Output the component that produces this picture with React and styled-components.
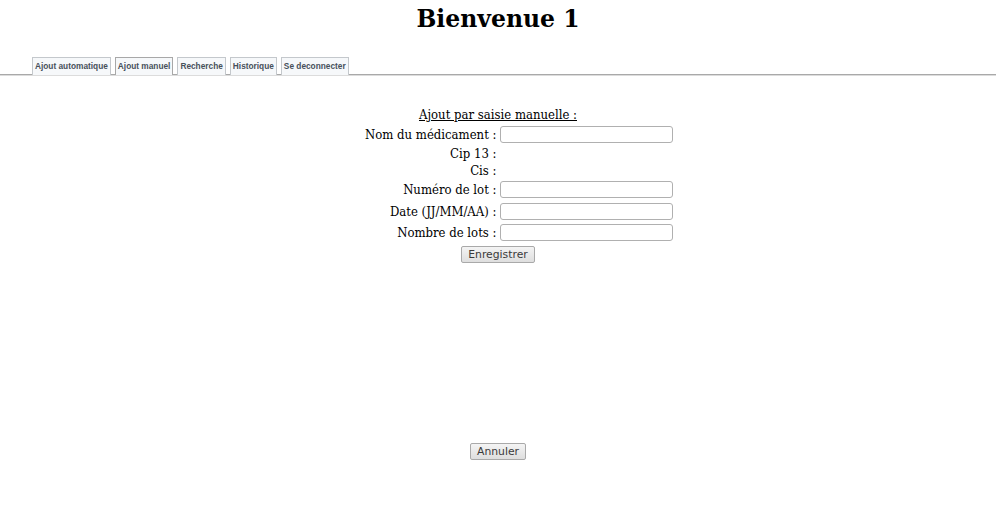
import styled, { createGlobalStyle } from "styled-components";

const GlobalStyle = createGlobalStyle`
  html, body {
    margin: 0;
    padding: 0;
    background: #ffffff;
  }
  body {
    font-family: "DejaVu Serif", serif;
    color: #000;
  }
`;

const Page = styled.div`
  width: 996px;
  height: 511px;
  display: flex;
  flex-direction: column;
`;

const Title = styled.h1`
  margin: 4px 0 0;
  height: 30px;
  text-align: center;
  font-family: "DejaVu Serif", serif;
  font-weight: bold;
  font-size: 23.5px;
  line-height: 30px;
`;

const TabBar = styled.ul`
  list-style: none;
  margin: 23px 0 0;
  padding: 0 0 0 32px;
  display: flex;
  gap: 4px;
  border-bottom: 1px solid #a9a9a9;
  box-shadow: 0 1px 0 #dcdcdc;
`;

const Tab = styled.li`
  height: 17px;
  padding: 0 2px;
  margin-bottom: -1px;
  border: 1px solid ${(p) => (p.$active ? "#a8a8a8" : "#c4c8cc")};
  border-bottom: none;
  background: #f6f8fa;
  font-family: "Liberation Sans", Arial, sans-serif;
  font-weight: bold;
  font-size: 8.3px;
  line-height: 17px;
  color: #47505a;
  white-space: nowrap;
`;

const Main = styled.div`
  flex: 1;
  display: flex;
  flex-direction: column;
  align-items: center;
  padding-top: 30px;
  font-size: 13px;
  font-stretch: condensed;
`;

const Heading = styled.div`
  height: 19px;
  line-height: 19px;
  text-decoration: underline;
`;

const Row = styled.div`
  box-sizing: border-box;
  width: 100%;
  display: grid;
  grid-template-columns: 1fr 1fr;
  column-gap: 3px;
  align-items: start;
  height: ${(p) => p.$h}px;
  padding-top: ${(p) => (p.$plain ? 0 : 2)}px;
`;

const Label = styled.label`
  text-align: right;
  line-height: 17px;
  white-space: nowrap;
`;

const Field = styled.input`
  box-sizing: border-box;
  width: 173px;
  height: 17px;
  margin: 0;
  border: 1px solid #b0b0b0;
  border-radius: 3px;
  background: #fff;
`;

const Button = styled.button`
  box-sizing: border-box;
  height: 17px;
  padding: 0 6px;
  border: 1px solid #a9a9a9;
  border-radius: 2px;
  background: linear-gradient(#f4f4f4, #dedede);
  font-family: "DejaVu Sans", sans-serif;
  font-size: 10.8px;
  line-height: 15px;
  color: #3a3a3a;
`;

const ButtonRow = styled.div`
  margin-top: ${(p) => p.$top || "2px"};
  display: flex;
  justify-content: center;
`;

const tabs = ["Ajout automatique", "Ajout manuel", "Recherche", "Historique", "Se deconnecter"];

const fields = [
  { label: "Nom du médicament :", input: true, h: 21 },
  { label: "Cip 13 :", h: 17 },
  { label: "Cis :", h: 17 },
  { label: "Numéro de lot :", input: true, h: 22 },
  { label: "Date (JJ/MM/AA) :", input: true, h: 21 },
  { label: "Nombre de lots :", input: true, h: 22 },
];

const App = () => {
  return (
    <Page>
      <GlobalStyle />
      <Title>Bienvenue 1</Title>
      <TabBar>
        {tabs.map((t) => (
          <Tab key={t} $active={t === "Ajout manuel"}>{t}</Tab>
        ))}
      </TabBar>
      <Main>
        <Heading>Ajout par saisie manuelle :</Heading>
        {fields.map((f) => (
          <Row key={f.label} $plain={!f.input} $h={f.h}>
            <Label>{f.label}</Label>
            {f.input ? <Field type="text" /> : <span />}
          </Row>
        ))}
        <ButtonRow>
          <Button>Enregistrer</Button>
        </ButtonRow>
        <ButtonRow $top="180px">
          <Button>Annuler</Button>
        </ButtonRow>
      </Main>
    </Page>
  );
};

export default App;
